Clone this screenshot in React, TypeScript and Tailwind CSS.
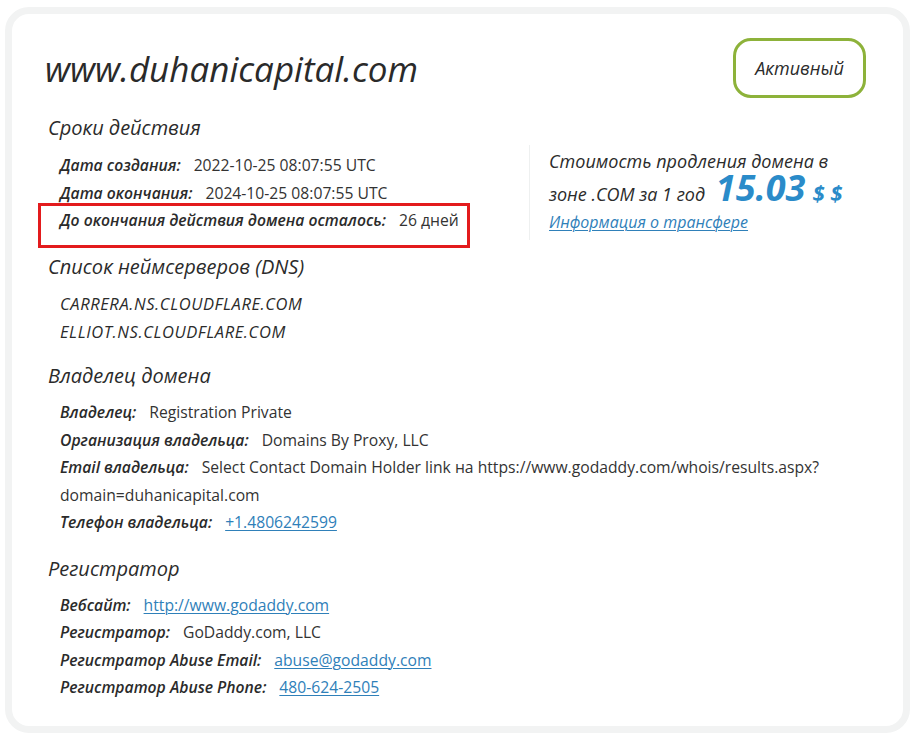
import * as React from 'react'

const Row = ({ label, children }: { label: string; children: React.ReactNode }) => (
  <div className="h-[28px] leading-[28px] text-[15.7px] whitespace-nowrap">
    <span className="italic font-semibold text-[#2b2b2b]">{label}</span>
    <span className="ml-[13px] text-[#333]">{children}</span>
  </div>
)

const Link = ({ children }: { children: React.ReactNode }) => (
  <a href="#" className="text-[#2f80b9] underline underline-offset-2 decoration-1">{children}</a>
)

const SectionTitle = ({ children }: { children: React.ReactNode }) => (
  <h2 className="h-[30px] leading-[30px] text-[20px] italic text-[#2b2b2b] mb-[8px]">{children}</h2>
)

export default function App() {
  return (
    <div className="w-[916px] h-[735px] bg-white pl-[5px] pr-[6px] pt-[7px] pb-[2px]" style={{ fontFamily: '"Open Sans", "Noto Sans", sans-serif' }}>
      <div className="h-full rounded-[24px] border-[7px] border-[#f2f3f3] bg-white pl-[36px] pr-[37px] pt-[24px]">
        {/* Header */}
        <div className="flex items-start justify-between">
          <h1 className="mt-[11px] -ml-[3px] text-[35px] leading-[40px] italic font-medium text-[#2a2a2a]">
            www.duhanicapital.com
          </h1>
          <div className="w-[133px] h-[60px] rounded-[18px] border-[3px] border-[#8db23a] flex items-center justify-center text-[18px] italic text-[#2b2b2b]">
            Активный
          </div>
        </div>

        {/* Сроки действия */}
        <div className="flex mt-[15px]">
          <div className="w-[481px]">
            <SectionTitle>Сроки действия</SectionTitle>
            <div className="pl-[12px]">
              <Row label="Дата создания:">2022-10-25 08:07:55 UTC</Row>
              <Row label="Дата окончания:">2024-10-25 08:07:55 UTC</Row>
            </div>
            <div className="-mt-[4px] -ml-[10px] w-[432px] h-[45px] border-[3px] border-[#e31b1d] pl-[19px]">
              <Row label="До окончания действия домена осталось:">26 дней</Row>
            </div>
          </div>
          <div className="mt-[32px] h-[95px] border-l border-[#eef0f0] pl-[19px] pt-[1px] text-[#2b2b2b]">
            <div className="h-[30px] text-[18px] italic leading-[30px] whitespace-nowrap">Стоимость продления домена в</div>
            <div className="h-[33px] text-[18px] italic leading-[33px] whitespace-nowrap">
              зоне .COM за 1 год{' '}
              <span className="inline-block h-[24px] leading-[24px] ml-[6px] text-[36px] font-bold text-[#2a8bc9]">15.03</span>
              <span className="ml-[7px] text-[22px] font-bold text-[#2a8bc9]">$ $</span>
            </div>
            <div className="h-[26px] text-[16px] italic leading-[26px]">
              <Link>Информация о трансфере</Link>
            </div>
          </div>
        </div>

        {/* DNS */}
        <div className="mt-[4px]">
          <SectionTitle>Список неймсерверов (DNS)</SectionTitle>
          <div className="pl-[12px] text-[16.5px] tracking-[0.6px] italic text-[#2b2b2b]">
            <div className="h-[28px] leading-[28px]">CARRERA.NS.CLOUDFLARE.COM</div>
            <div className="h-[28px] leading-[28px]">ELLIOT.NS.CLOUDFLARE.COM</div>
          </div>
        </div>

        {/* Владелец */}
        <div className="mt-[15px]">
          <SectionTitle>Владелец домена</SectionTitle>
          <div className="pl-[12px] [&>div]:h-[27.5px] [&>div]:leading-[27.5px]">
            <Row label="Владелец:">Registration Private</Row>
            <Row label="Организация владельца:">Domains By Proxy, LLC</Row>
            <Row label="Email владельца:">Select Contact Domain Holder link на https://www.godaddy.com/whois/results.aspx?</Row>
            <div className="text-[15.7px] text-[#333]">domain=duhanicapital.com</div>
            <Row label="Телефон владельца:"><Link>+1.4806242599</Link></Row>
          </div>
        </div>

        {/* Регистратор */}
        <div className="mt-[17px]">
          <SectionTitle>Регистратор</SectionTitle>
          <div className="pl-[12px] [&>div]:h-[27.5px] [&>div]:leading-[27.5px]">
            <Row label="Вебсайт:"><Link>http://www.godaddy.com</Link></Row>
            <Row label="Регистратор:">GoDaddy.com, LLC</Row>
            <Row label="Регистратор Abuse Email:"><Link>abuse@godaddy.com</Link></Row>
            <Row label="Регистратор Abuse Phone:"><Link>480-624-2505</Link></Row>
          </div>
        </div>
      </div>
    </div>
  )
}
